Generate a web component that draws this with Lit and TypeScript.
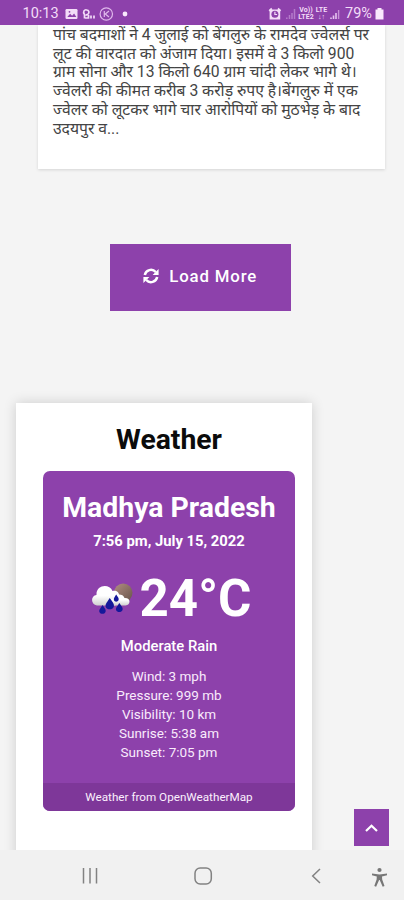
import { LitElement, html, css } from "lit";
import { customElement } from "lit/decorators.js";

const STORY = [
  "पांच बदमाशों ने 4 जुलाई को बेंगलुरु के रामदेव ज्वेलर्स पर",
  "लूट की वारदात को अंजाम दिया। इसमें वे 3 किलो 900",
  "ग्राम सोना और 13 किलो 640 ग्राम चांदी लेकर भागे थे।",
  "ज्वेलरी की कीमत करीब 3 करोड़ रुपए है।बेंगलुरु में एक",
  "ज्वेलर को लूटकर भागे चार आरोपियों को मुठभेड़ के बाद",
  "उदयपुर व...",
];

const DETAILS = [
  "Wind: 3 mph",
  "Pressure: 999 mb",
  "Visibility: 10 km",
  "Sunrise: 5:38 am",
  "Sunset: 7:05 pm",
];

@customElement("status-bar")
class StatusBar extends LitElement {
  static styles = css`
    :host { display: flex; align-items: center; height: 25px; box-sizing: border-box; padding: 2px 20px 0 22.5px; background: #8d41ab; color: #f3dcf8; font: 14.5px/20px Roboto, sans-serif; }
    .time { width: 42px; white-space: nowrap; }
    svg { display: block; flex: none; }
    .gap { flex: 1; }
    .pct { margin-left: 5px; width: 30px; white-space: nowrap; }
    .volte { display: grid; flex: none; width: 16px; font: 700 7px/7px Roboto, sans-serif; text-align: center; }
    .volte.narrow { width: 13px; margin-left: 1px; }
    .sig { margin-left: 2px; }
  `;
  render() {
    return html`
      <span class="time">10:13</span>
      <svg width="66" height="14" viewBox="65 6 66 14">
        <rect x="65.500" y="8" width="12" height="10" rx="1.2" fill="#f3dcf8" />
        <path d="M67.300 16l2.800-3.200 2 2 2-2.400 2.200 3.600z" fill="#8d41ab" />
        <circle cx="69.500" cy="10.800" r=".9" fill="#8d41ab" />
        <path d="M84.500 17.500v-4c-2-3 0-5 2-4.700 2.600.2 3 2.800 1.600 4.200-.8 1-1.800 1-2.400.5M85 17h3.500v-3M91 17.500v-3M94 17.500v-3" fill="none" stroke="#f3dcf8" stroke-width="1.700" />
        <circle cx="106.300" cy="13" r="6.200" fill="none" stroke="#dfb8eb" stroke-width="1.200" />
        <path d="M104.300 10v6M109 10l-3.700 3 3.700 3" fill="none" stroke="#dfb8eb" stroke-width="1.200" />
        <circle cx="125" cy="13" r="2.400" fill="#f9e8fc" />
      </svg>
      <span class="gap"></span>
      <svg width="30" height="14" viewBox="267 6 30 14">
        <path d="M268.200 9.800l2.600-2.300M279.600 9.800L277 7.500" stroke="#f3dcf8" stroke-width="1.800" />
        <path d="M268.600 8.500h10.600V18.500h-10.600z" fill="#f3dcf8" />
        <circle cx="273.900" cy="13.200" r="3.500" fill="#8d41ab" />
        <path d="M273.900 10.800v2.700h2.200" fill="none" stroke="#f3dcf8" stroke-width="1.200" />
        <path d="M285.800 18v-1.500M288.500 18v-4M291 18v-6M293.500 18V8" stroke="#b57bcb" stroke-width="1.500" />
      </svg>
      <span class="volte"><span>Vo))</span><span>LTE2</span></span>
      <span class="volte narrow"><span>LTE</span><span>↓↑</span></span>
      <svg class="sig" width="10" height="12" viewBox="0 0 10 12">
        <path d="M1 11V9.500M3.500 11V7.500M6 11V5" stroke="#e6c5f0" stroke-width="1.600" /><path d="M8.600 11V2" stroke="#c793d8" stroke-width="1.400" />
      </svg>
      <span class="pct">79%</span>
      <svg width="9" height="12" viewBox="0 0 9 12"><path d="M2.500 0h4v1.400H8.500V11.500H.5V1.400h2z" fill="#f9e8fc" /></svg>
    `;
  }
}

@customElement("story-card")
class StoryCard extends LitElement {
  static styles = css`
    :host { display: block; box-sizing: border-box; width: 347px; height: 144px; margin-left: 37.5px; padding: 1px 15px 0 15.500px; background: #fff; box-shadow: 0 1px 3px rgba(0,0,0,.13); overflow: hidden; color: #444; font: 15.7px/18.7px Roboto, "Noto Sans Devanagari", "Noto Sans", sans-serif; }
    .line { white-space: nowrap; }
  `;
  render() {
    return html`${STORY.map((l) => html`<div class="line">${l}</div>`)}`;
  }
}

@customElement("weather-card")
class WeatherCard extends LitElement {
  static styles = css`
    :host { display: block; box-sizing: border-box; width: 296px; height: 460px; margin: 92px 0 0 15.5px; padding: 19px 16.5px 0 27.5px; background: #fff; box-shadow: 0 0 12px rgba(0,0,0,.16); font-family: Roboto, sans-serif; text-align: center; }
    h2 { margin: 0; font-size: 28.3px; font-weight: 700; line-height: 36px; color: #0b0b0b; }
    .panel { display: flex; flex-direction: column; height: 340px; margin-top: 13px; border-radius: 7px; overflow: hidden; background: #8d41ab; color: #fff; }
    .place { margin-top: 19px; font-size: 28.4px; font-weight: 700; line-height: 36px; white-space: nowrap; }
    .when { margin-top: 5px; font-size: 14.8px; font-weight: 700; line-height: 20px; }
    .now { display: flex; align-items: center; justify-content: center; height: 60px; margin-top: 18px; margin-left: 5px; gap: 7px; }
    .temp { font-size: 51px; font-weight: 700; line-height: 60px; }
    .sky { flex: none; }
    .cond { margin-top: 7px; font-size: 14.8px; font-weight: 500; line-height: 20px; }
    .list { margin-top: 11px; font-size: 13.5px; line-height: 19.1px; color: #f9ebfc; }
    .foot { height: 28px; margin-top: auto; background: #7e3799; font-size: 11.7px; line-height: 28px; color: #fbeffd; }
  `;
  render() {
    return html`
      <h2>Weather</h2>
      <div class="panel">
        <div class="place">Madhya Pradesh</div>
        <div class="when">7:56 pm, July 15, 2022</div>
        <div class="now">
          <svg class="sky" width="41" height="32" viewBox="0 0 41 32">
            <defs>
              <linearGradient id="moon" x1="0" y1="0" x2="1" y2="1"><stop offset="0" stop-color="#b38e83" /><stop offset="1" stop-color="#665348" /></linearGradient>
              <linearGradient id="cloud" x1="0" y1="0" x2="0" y2="1"><stop offset=".5" stop-color="#fff" /><stop offset="1" stop-color="#cfd0cf" /></linearGradient>
            </defs>
            <circle cx="31.200" cy="9.800" r="9.300" fill="url(#moon)" />
            <path d="M5 22.500C-1.500 21.500 -1.500 12.500 4.500 12 4 1.500 17.500 .5 20.500 8c4-1 7.500 1.500 6.500 6 1 4.500-1.500 8.500-5 8.500z" fill="url(#cloud)" />
            <path d="M21 22.500c-4-1-3.500-7 .5-7 1-5 9.500-5.500 11-.5 6.500-.5 6.500 7 1 7.500z" fill="url(#cloud)" />
            <g fill="#15199a">
              <path d="M17.700 15c2.600 3.800 5 6 4.100 8.700-1.300 3.500-7 3.500-8.100 0-.8-2.700 1.900-4.900 4-8.700z" />
              <path d="M24.200 11.500c1.600 2.600 3 3.800 2.400 5.500-.9 2.200-4 2.200-4.700 0-.5-1.800 1-3.200 2.300-5.500z" />
              <path d="M10.500 22c2 3.200 3.800 4.400 3 6.900-1 2.600-5.100 2.600-6.100 0-.7-2.400 1.500-3.700 3.100-6.900z" />
              <path d="M27.300 20c2 3.200 4 4.600 3.200 7-1 2.800-5.500 2.800-6.400 0-.7-2.400 1.600-3.800 3.200-7z" />
            </g>
          </svg>
          <span class="temp">24°C</span>
        </div>
        <div class="cond">Moderate Rain</div>
        <div class="list">${DETAILS.map((d) => html`<div>${d}</div>`)}</div>
        <div class="foot">Weather from OpenWeatherMap</div>
      </div>
    `;
  }
}

@customElement("nav-bar")
class NavBar extends LitElement {
  static styles = css`
    :host { display: block; height: 50px; background: #f1f1f1; position: relative; }
    svg { display: block; }
  `;
  render() {
    return html`<svg width="404" height="50" viewBox="0 850 404 50" fill="none" stroke="#828282" stroke-width="1.5">
      <path d="M83.500 868v15.500M90 868v15.500M96.500 868v15.500" />
      <rect x="195" y="868" width="16.300" height="16" rx="5.200" />
      <path d="M320 869l-7.300 7 7.300 7" />
      <circle cx="379.500" cy="870" r="2.100" fill="#777" stroke="none" />
      <path d="M372 873.600q7.500 1.600 15 0v1.700l-5 1.100.2 3.200 2.300 6.500-1.800.7-3-6.800h-.6l-3 6.800-1.800-.7 2.300-6.500.2-3.200-4.800-1.100z" fill="#777" stroke="none" />
    </svg>`;
  }
}

@customElement("app-root")
class AppRoot extends LitElement {
  static styles = css`
    :host { display: flex; flex-direction: column; width: 404px; height: 900px; overflow: hidden; background: #f4f4f4; font-family: Roboto, sans-serif; }
    status-bar, nav-bar { flex: none; z-index: 1; }
    main { flex: 1; min-height: 0; overflow: hidden; position: relative; }
    .more { display: flex; align-items: center; justify-content: center; box-sizing: border-box; width: 181.5px; height: 67px; margin: 74.5px 0 0 109.5px; padding: 0 0 2px; border: 0; gap: 10px; background: #8d41ab; color: #fff; font: 500 16.8px/20px Roboto, sans-serif; letter-spacing: .85px; }
    .top { position: absolute; right: 15px; bottom: 4px; width: 35px; height: 37px; display: grid; place-items: center; padding: 0; border: 0; background: #8d41ab; }
  `;
  render() {
    return html`
      <status-bar></status-bar>
      <main>
        <story-card></story-card>
        <button class="more">
          <svg width="16" height="16" viewBox="0 0 16 16">
            <path d="M1.800 7A6.300 6.300 0 0 1 12.700 4M14.200 9A6.300 6.300 0 0 1 3.300 12" fill="none" stroke="#fff" stroke-width="2.500" />
            <path d="M15.600 1v6H9.600zM.4 15V9h6z" fill="#fff" />
          </svg>
          <span>Load More</span>
        </button>
        <weather-card></weather-card>
        <button class="top" aria-label="Back to top">
          <svg width="15" height="10" viewBox="0 0 15 10"><path d="M2 8l5.500-5.300L13 8" fill="none" stroke="#fff" stroke-width="2.200" /></svg>
        </button>
      </main>
      <nav-bar></nav-bar>
    `;
  }
}
